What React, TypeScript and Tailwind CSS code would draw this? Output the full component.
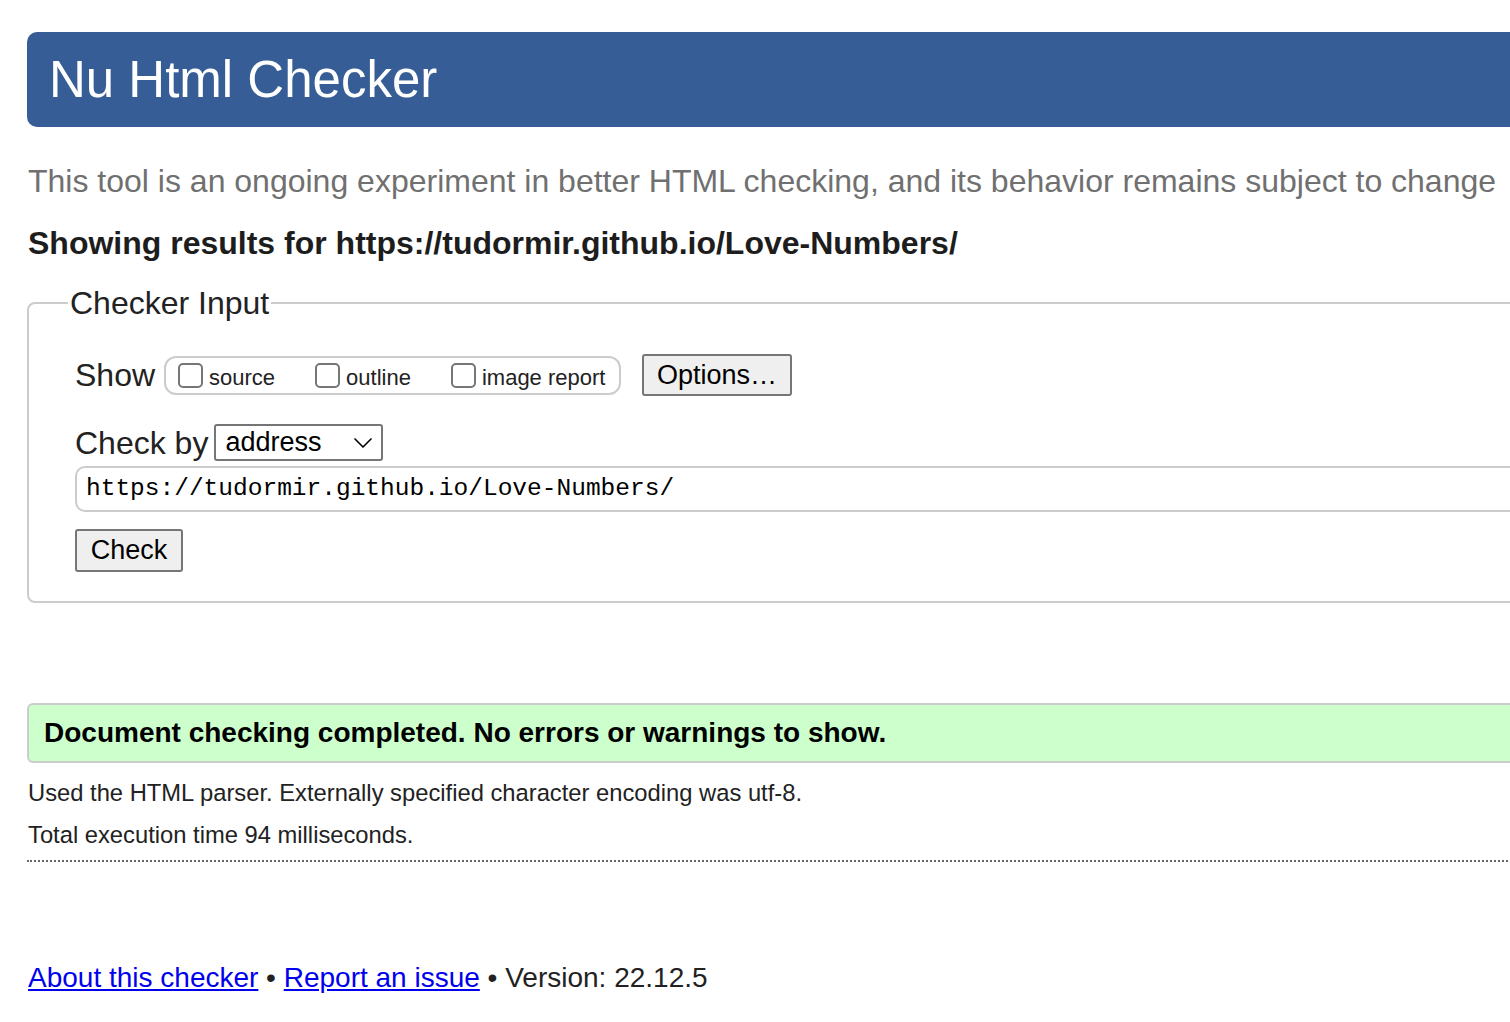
import { ChevronDown } from 'lucide-react'

const sans = { fontFamily: '"Liberation Sans", Arial, sans-serif' }

function Box({ label }: { label: string }) {
  return (
    <label className="flex items-center">
      <span className="mr-[6px] inline-block h-[25px] w-[25px] rounded-[5px] border-2 border-[#767676] bg-white" />
      <span className="text-[22px] leading-none text-[#222] mt-[6px]">{label}</span>
    </label>
  )
}

export default function App() {
  return (
    <div className="h-[1022px] w-[1510px] overflow-hidden bg-white" style={sans}>
      <div className="w-[1560px] pl-[27px] pt-[32px] text-[#222]">
        <header className="flex h-[95px] items-center rounded-[10px] bg-[#365d95] pl-[22px]">
          <h1 className="text-[51px] leading-none text-white">Nu Html Checker</h1>
        </header>

        <p className="mt-[38px] pl-px text-[32px] leading-none text-[#707070]">
          This tool is an ongoing experiment in better HTML checking, and its behavior remains subject to change
        </p>

        <h2 className="mt-[30px] pl-px text-[32px] font-bold leading-none text-[#1d1d1d]">
          Showing results for https://tudormir.github.io/Love-Numbers/
        </h2>

        <fieldset className="mt-[28px] rounded-[8px] border-2 border-[#cccccc] pb-[29px] pl-[46px] pt-[8px]">
          <legend className="ml-[-7px] px-[2px] text-[32px] leading-none text-[#222]">Checker Input</legend>

          <div className="mt-[27px] flex items-center">
            <span className="text-[32px] leading-none">Show</span>
            <div className="ml-[9px] flex h-[39px] w-[457px] items-center gap-[40px] rounded-[12px] border-2 border-[#cccccc] pl-[12px]">
              <Box label="source" />
              <Box label="outline" />
              <Box label="image report" />
            </div>
            <button className="ml-[21px] h-[42px] w-[150px] rounded-[3px] border-2 border-[#767676] bg-[#efefef] text-[27px] leading-none text-black">
              Options…
            </button>
          </div>

          <div className="mt-[28px] flex items-center">
            <span className="text-[32px] leading-none">Check by</span>
            <div className="ml-[6px] flex h-[37px] w-[169px] items-center justify-between rounded-[3px] border-2 border-[#767676] pl-[9px] pr-[2px]">
              <span className="text-[27px] leading-none text-black">address</span>
              <ChevronDown size={32} strokeWidth={1.25} className="text-black" />
            </div>
          </div>

          <div className="mt-[5px] flex h-[46px] items-center rounded-[10px] border-2 border-[#cccccc] pl-[9px]">
            <span className="text-[24.5px] leading-none text-black" style={{ fontFamily: '"Liberation Mono", "DejaVu Sans Mono", monospace' }}>
              https://tudormir.github.io/Love-Numbers/
            </span>
          </div>

          <button className="mt-[17px] h-[43px] w-[108px] rounded-[3px] border-2 border-[#767676] bg-[#efefef] text-[27px] leading-none text-black">
            Check
          </button>
        </fieldset>

        <div className="mt-[100px] flex h-[60px] items-center rounded-[6px] border-2 border-[#cccccc] bg-[#ccffcc] pl-[15px]">
          <p className="text-[28px] font-bold leading-none text-black">
            Document checking completed. No errors or warnings to show.
          </p>
        </div>

        <p className="mt-[18px] pl-px text-[23.75px] leading-none text-[#222]">
          Used the HTML parser. Externally specified character encoding was utf-8.
        </p>
        <p className="mt-[18px] pl-px text-[23.75px] leading-none text-[#222]">Total execution time 94 milliseconds.</p>
        <div className="mt-[13px] border-t-2 border-dotted border-[#666]" />

        <p className="mt-[102px] pl-px text-[28px] leading-none text-[#222]">
          <a href="#" className="text-[#0000ee] underline">About this checker</a> •{' '}
          <a href="#" className="text-[#0000ee] underline">Report an issue</a> • Version: 22.12.5
        </p>
      </div>
    </div>
  )
}
